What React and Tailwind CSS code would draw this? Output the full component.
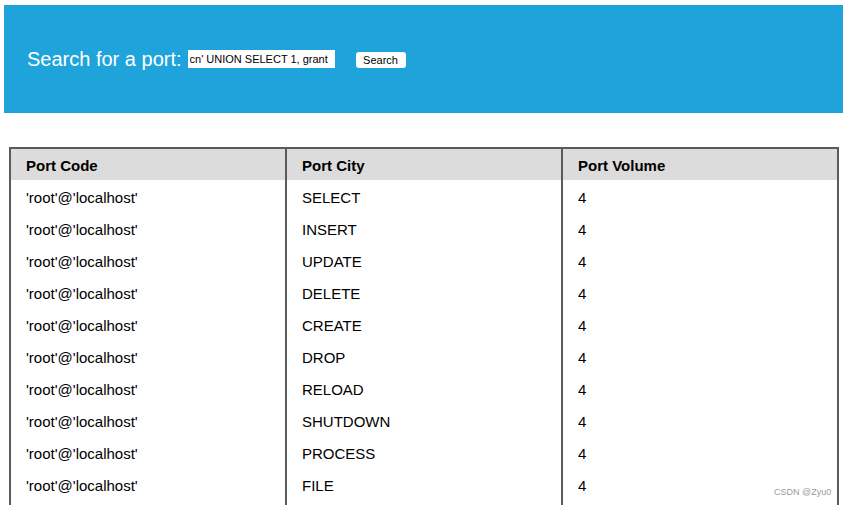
const privs = [
  "SELECT",
  "INSERT",
  "UPDATE",
  "DELETE",
  "CREATE",
  "DROP",
  "RELOAD",
  "SHUTDOWN",
  "PROCESS",
  "FILE",
  "REFERENCES",
  "INDEX",
]

const App = () => {
  return (
    <div className="relative h-[505px] overflow-hidden bg-white font-['Liberation_Sans',Arial,sans-serif] text-black">
      <div className="ml-[4px] mr-[2px] mt-[5px] flex h-[108px] items-center bg-[#1ea4db] pl-[23px]">
        <span className="text-[20px] text-white">Search for a port:</span>
        <input
          type="text"
          readOnly
          value="cn' UNION SELECT 1, grant"
          className="ml-[6px] h-[18px] w-[147px] bg-white px-[2px] text-[11px] text-black outline-none"
        />
        <button className="ml-[21px] mt-[2px] h-[16px] w-[50px] rounded-[3px] bg-white text-[11px] leading-[16px] text-black">
          Search
        </button>
      </div>

      <table className="ml-[9px] mt-[34px] w-[830px] table-fixed border-collapse border-2 border-[#5a5a5a] text-[15px]">
        <thead>
          <tr className="h-[32px] bg-[#dcdcdc] text-left">
            <th className="px-[15px] pt-[4px] font-bold">Port Code</th>
            <th className="border-l-2 border-[#5a5a5a] px-[15px] pt-[4px] font-bold">Port City</th>
            <th className="border-l-2 border-[#5a5a5a] px-[15px] pt-[4px] font-bold">Port Volume</th>
          </tr>
        </thead>
        <tbody>
          {privs.map((p) => (
            <tr key={p} className="h-[32px]">
              <td className="px-[15px] pt-[4px]">'root'@'localhost'</td>
              <td className="border-l-2 border-[#5a5a5a] px-[15px] pt-[4px]">{p}</td>
              <td className="border-l-2 border-[#5a5a5a] px-[15px] pt-[4px]">4</td>
            </tr>
          ))}
        </tbody>
      </table>

      <span className="absolute left-[774px] top-[486px] text-[9px] text-[#9a9a9a]">CSDN @Zyu0</span>
    </div>
  )
}

export default App
